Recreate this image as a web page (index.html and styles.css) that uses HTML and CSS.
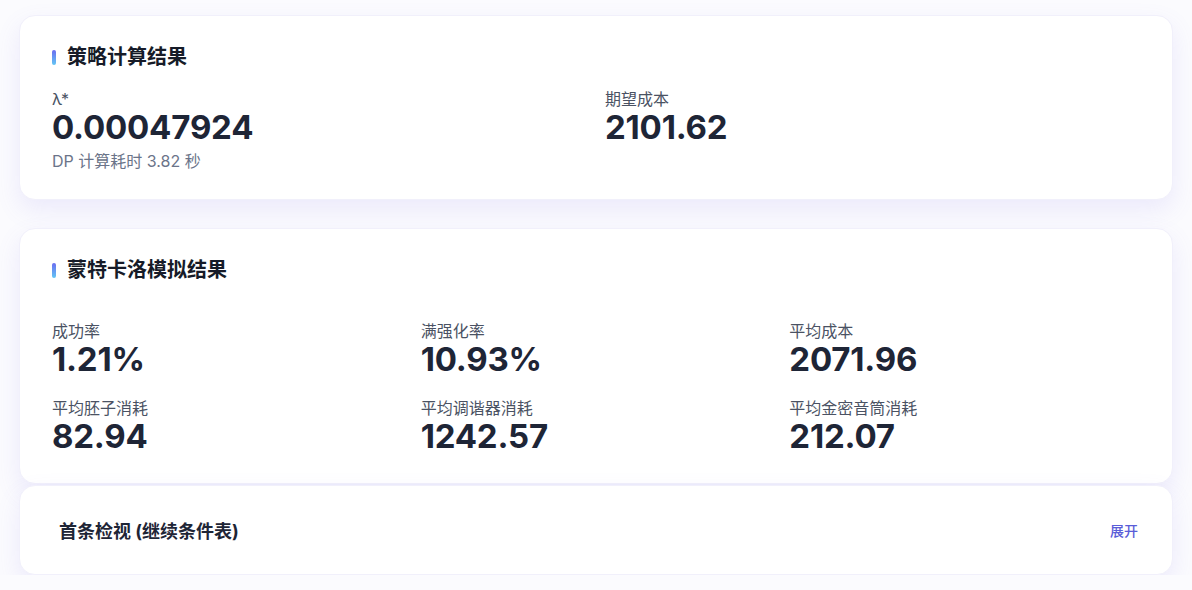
FILE: index.html
```html
<!DOCTYPE html>
<html lang="zh-CN">

<head>
    <meta charset="UTF-8">
    <meta name="viewport" content="width=device-width, initial-scale=1.0">
    <title>策略计算结果</title>
    <link rel="stylesheet" href="styles.css">
</head>

<body>
    <div class="page">

        <!-- DP solver summary -->
        <section class="card">
            <h2 class="card-title"><span class="bar"></span>策略计算结果</h2>
            <div class="grid grid-2">
                <div class="stat">
                    <div class="stat-label">λ*</div>
                    <div class="stat-value">0.00047924</div>
                    <div class="stat-note">DP 计算耗时 3.82 秒</div>
                </div>
                <div class="stat">
                    <div class="stat-label">期望成本</div>
                    <div class="stat-value">2101.62</div>
                </div>
            </div>
        </section>

        <!-- Monte Carlo results -->
        <section class="card card-mc">
            <h2 class="card-title"><span class="bar"></span>蒙特卡洛模拟结果</h2>
            <div class="grid grid-3">
                <div class="stat">
                    <div class="stat-label">成功率</div>
                    <div class="stat-value">1.21%</div>
                </div>
                <div class="stat">
                    <div class="stat-label">满强化率</div>
                    <div class="stat-value">10.93%</div>
                </div>
                <div class="stat">
                    <div class="stat-label">平均成本</div>
                    <div class="stat-value">2071.96</div>
                </div>
                <div class="stat">
                    <div class="stat-label">平均胚子消耗</div>
                    <div class="stat-value">82.94</div>
                </div>
                <div class="stat">
                    <div class="stat-label">平均调谐器消耗</div>
                    <div class="stat-value">1242.57</div>
                </div>
                <div class="stat">
                    <div class="stat-label">平均金密音筒消耗</div>
                    <div class="stat-value">212.07</div>
                </div>
            </div>
        </section>

        <!-- Collapsible table -->
        <section class="card card-fold">
            <div class="fold-head">
                <span class="fold-title">首条检视 (继续条件表)</span>
                <a href="#" class="fold-toggle">展开</a>
            </div>
        </section>

    </div>
</body>

</html>
```

FILE: styles.css
```css
body {
    margin: 0;
    padding: 0;
    background-color: #fbfbfe;
    color: #1e2536;
    font-family: Inter, "Noto Sans CJK SC", sans-serif;
}

.page {
    padding: 15px 19px 0;
    display: flex;
    flex-direction: column;
}

.card {
    background-color: #fff;
    border: 1px solid #f1f0fb;
    border-radius: 16px;
    box-shadow: 0 10px 24px rgba(120, 110, 230, 0.12);
    padding: 23px 32px 23px;
    margin-bottom: 28px;
}

.card-mc {
    padding-bottom: 28px;
    margin-bottom: 1px;
}

.card-fold {
    padding: 0 34px 0 39px;
    margin-bottom: 0;
}

.card-title {
    display: flex;
    align-items: center;
    gap: 11px;
    margin: 0;
    font-size: 20px;
    font-weight: 700;
    line-height: 36px;
    color: #161b28;
}

.bar {
    width: 4px;
    height: 15px;
    border-radius: 2px;
    background: linear-gradient(180deg, #6a6cf0, #63c6f4);
}

.grid {
    display: grid;
    column-gap: 18px;
}

.grid-2 {
    grid-template-columns: 1fr 1fr;
    margin-top: 14px;
}

.grid-3 {
    grid-template-columns: 1fr 1fr 1fr;
    row-gap: 20px;
    margin-top: 33px;
}

.stat-label {
    font-size: 16px;
    line-height: 20px;
    color: #4a5263;
}

.stat-value {
    font-size: 33px;
    font-weight: 700;
    line-height: 37px;
    color: #1e2536;
    letter-spacing: -0.2px;
}

.stat-note {
    font-size: 16px;
    line-height: 30px;
    color: #6b7489;
}

.fold-head {
    display: flex;
    justify-content: space-between;
    align-items: center;
    height: 88px;
}

.fold-title {
    font-size: 18px;
    font-weight: 700;
    color: #1e2536;
}

.fold-toggle {
    font-size: 14px;
    font-weight: 500;
    color: #5a5dd8;
    text-decoration: none;
}
```
